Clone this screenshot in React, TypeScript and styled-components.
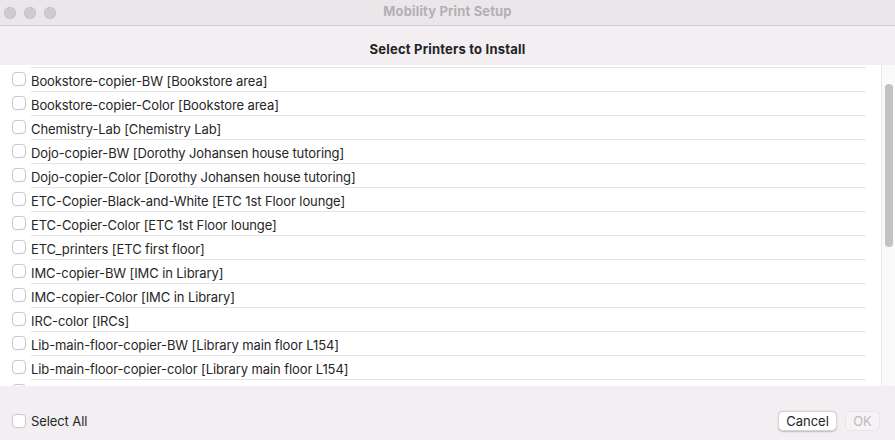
import React from "react";
import styled, { createGlobalStyle } from "styled-components";

const FONT = `Inter, "Liberation Sans", Arial, sans-serif`;

const Global = createGlobalStyle`
  html, body { margin: 0; padding: 0; }
  body {
    width: 895px;
    height: 440px;
    overflow: hidden;
    font-family: ${FONT};
    -webkit-font-smoothing: antialiased;
  }
`;

const Window = styled.div`
  width: 895px;
  height: 440px;
  display: flex;
  flex-direction: column;
  background: #f2eef2;
  overflow: hidden;
`;

const TitleBar = styled.div`
  height: 25px;
  flex: none;
  display: flex;
  align-items: center;
  position: relative;
  background: #ebe6ea;
  border-bottom: 1px solid #cfcacf;
`;

const Lights = styled.div`
  display: flex;
  gap: 8px;
  padding-left: 4px;
  padding-top: 1px;
`;

const Light = styled.span`
  width: 12px;
  height: 12px;
  border-radius: 50%;
  background: #cecace;
  box-shadow: inset 0 0 0 0.5px #bdb8bd;
`;

const WindowTitle = styled.div`
  position: absolute;
  left: 0;
  right: 0;
  top: 0;
  height: 25px;
  line-height: 22px;
  text-align: center;
  font-size: 13px;
  font-weight: 700;
  letter-spacing: 0.15px;
  color: #b3afb3;
  pointer-events: none;
`;

const Header = styled.div`
  height: 39px;
  flex: none;
  display: flex;
  align-items: center;
  justify-content: center;
  padding-top: 6px;
  box-sizing: border-box;
  font-size: 13px;
  font-weight: 700;
  letter-spacing: 0.2px;
  color: #232323;
`;

const ListFrame = styled.div`
  height: 321px;
  flex: none;
  display: flex;
  background: #ffffff;
  overflow: hidden;
`;

const List = styled.div`
  flex: 1;
  padding-top: 2px;
  overflow: hidden;
`;

const Row = styled.label`
  display: flex;
  align-items: center;
  height: 24px;
  padding-left: 12px;
`;

const Box = styled.span`
  width: 14px;
  height: 14px;
  flex: none;
  box-sizing: border-box;
  border: 1px solid #cbc7cb;
  border-radius: 4px;
  background: #fff;
  box-shadow: 0 0.5px 0.5px rgba(0, 0, 0, 0.05);
`;

const RowLabel = styled.span`
  flex: 1;
  height: 24px;
  margin-left: 5px;
  margin-right: 15px;
  padding-top: 2px;
  border-top: 1px solid #e4e4e4;
  box-sizing: border-box;
  display: flex;
  align-items: center;
  font-size: 13px;
  letter-spacing: -0.1px;
  color: #262626;
  white-space: nowrap;
`;

const Track = styled.div`
  width: 14px;
  flex: none;
  background: #fafafa;
  border-left: 1px solid #e9e9e9;
  padding: 19px 2px 0 3px;
  box-sizing: border-box;
`;

const Thumb = styled.div`
  width: 8px;
  height: 163px;
  border-radius: 4px;
  background: #c2c2c2;
`;

const Footer = styled.div`
  flex: 1;
  display: flex;
  align-items: center;
  justify-content: space-between;
  padding: 15px 15px 0 12px;
`;

const SelectAll = styled.label`
  display: flex;
  align-items: center;
  gap: 5px;
  font-size: 13px;
  letter-spacing: -0.1px;
  color: #262626;
`;

const Buttons = styled.div`
  display: flex;
  gap: 8px;
`;

const Button = styled.button<{ $disabled?: boolean }>`
  height: 20px;
  padding: 0;
  width: ${(p) => (p.$disabled ? "35px" : "59px")};
  border-radius: 5px;
  font-family: ${FONT};
  font-size: 13px;
  line-height: 18px;
  border: ${(p) => (p.$disabled ? "0.5px solid #e8e4e8" : "0.5px solid #d8d4d8")};
  background: ${(p) => (p.$disabled ? "#f6f3f6" : "#ffffff")};
  color: ${(p) => (p.$disabled ? "#bdbabd" : "#262626")};
  box-shadow: ${(p) =>
    p.$disabled ? "none" : "0 0.5px 1.5px rgba(0,0,0,0.22)"};
`;

const printers = [
  "Bookstore-copier-BW [Bookstore area]",
  "Bookstore-copier-Color [Bookstore area]",
  "Chemistry-Lab [Chemistry Lab]",
  "Dojo-copier-BW [Dorothy Johansen house tutoring]",
  "Dojo-copier-Color [Dorothy Johansen house tutoring]",
  "ETC-Copier-Black-and-White [ETC 1st Floor lounge]",
  "ETC-Copier-Color [ETC 1st Floor lounge]",
  "ETC_printers [ETC first floor]",
  "IMC-copier-BW [IMC in Library]",
  "IMC-copier-Color [IMC in Library]",
  "IRC-color [IRCs]",
  "Lib-main-floor-copier-BW [Library main floor L154]",
  "Lib-main-floor-copier-color [Library main floor L154]",
  "",
];

export default function App() {
  return (
    <>
      <Global />
      <Window>
        <TitleBar>
          <Lights>
            <Light />
            <Light />
            <Light />
          </Lights>
          <WindowTitle>Mobility Print Setup</WindowTitle>
        </TitleBar>
        <Header>Select Printers to Install</Header>
        <ListFrame>
          <List>
            {printers.map((p, i) => (
              <Row key={i}>
                <Box />
                <RowLabel>{p}</RowLabel>
              </Row>
            ))}
          </List>
          <Track>
            <Thumb />
          </Track>
        </ListFrame>
        <Footer>
          <SelectAll>
            <Box />
            Select All
          </SelectAll>
          <Buttons>
            <Button>Cancel</Button>
            <Button $disabled>OK</Button>
          </Buttons>
        </Footer>
      </Window>
    </>
  );
}
